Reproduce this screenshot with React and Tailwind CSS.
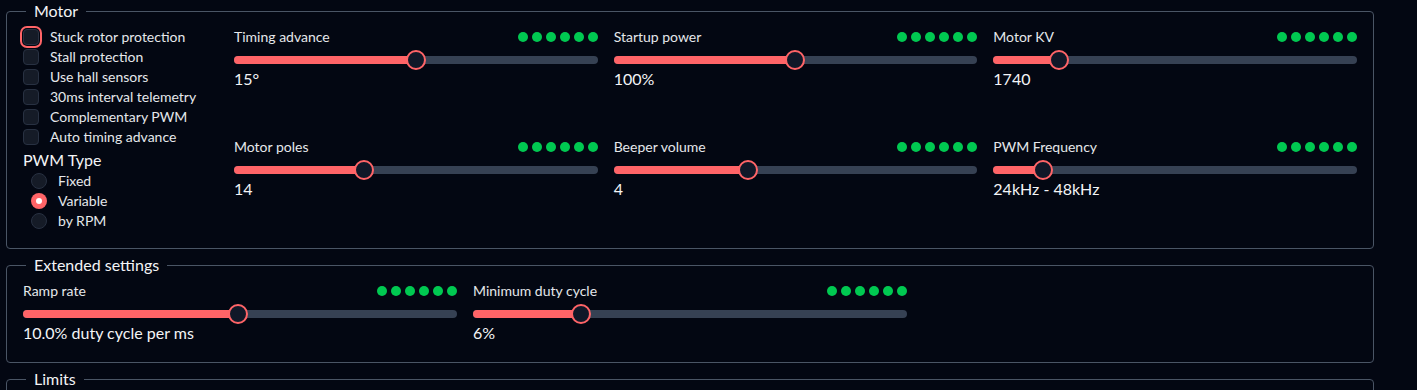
const Dots = () => (
  <div className="flex gap-[4px]">
    {Array.from({ length: 6 }).map((_, i) => (
      <div key={i} className="w-[10px] h-[10px] rounded-full bg-green-500" />
    ))}
  </div>
)

const Slider = ({ label, value, pct }) => (
  <div className="flex flex-col">
    <div className="flex items-center justify-between h-5">
      <span className="text-[14px] text-gray-200 mb-[2px]">{label}</span>
      <Dots />
    </div>
    <div className="relative h-6 mt-[1px] flex items-center">
      <div className="w-full h-2 rounded-full bg-gray-700" />
      <div
        className="absolute left-0 h-2 rounded-full bg-red-400"
        style={{ width: `calc(${pct} * (100% - 20px) + 10px)` }}
      />
      <div
        className="absolute w-5 h-5 rounded-full bg-gray-900 border-2 border-red-400"
        style={{ left: `calc(${pct} * (100% - 20px))` }}
      />
    </div>
    <div className="h-5 mt-[-3px] flex items-center text-[16px] text-gray-100">{value}</div>
  </div>
)

const Check = ({ label, focus }) => (
  <label className="flex items-center h-5 gap-[11px]">
    <span
      className={
        focus
          ? 'w-4 h-4 rounded bg-[#151b27] border border-[#283142] ring-2 ring-red-400 ring-offset-1 ring-offset-[#030712]'
          : 'w-4 h-4 rounded bg-[#151b27] border border-[#283142]'
      }
    />
    <span className="text-[14px] text-gray-200 mb-[2px]">{label}</span>
  </label>
)

const Radio = ({ label, checked }) => (
  <label className="flex items-center h-5 gap-[11px] pl-2">
    {checked ? (
      <span className="w-4 h-4 rounded-full bg-red-400 flex items-center justify-center">
        <span className="w-[6px] h-[6px] rounded-full bg-white" />
      </span>
    ) : (
      <span className="w-4 h-4 rounded-full bg-[#151b27] border border-[#283142]" />
    )}
    <span className="text-[14px] text-gray-200 mb-[2px]">{label}</span>
  </label>
)

const Legend = ({ children }) => (
  <legend className="ml-[3px] px-2 h-5 leading-5 text-[16px] text-gray-100">{children}</legend>
)

const App = () => {
  return (
    <div
      className="min-h-screen bg-[#030712] pl-[6px] pt-[1px]"
      style={{ fontFamily: 'Lato, "Open Sans", sans-serif' }}
    >
      <fieldset className="w-[1368px] border border-gray-600 rounded px-4 pt-[6px] pb-[17px]">
        <Legend>Motor</Legend>
        <div className="flex gap-4">
          <div className="w-[195px] shrink-0 flex flex-col">
            <Check label="Stuck rotor protection" focus />
            <Check label="Stall protection" />
            <Check label="Use hall sensors" />
            <Check label="30ms interval telemetry" />
            <Check label="Complementary PWM" />
            <Check label="Auto timing advance" />
            <div className="h-5 mt-[3px] flex items-center text-[16px] text-gray-100">PWM Type</div>
            <div className="flex flex-col mt-[1px]">
              <Radio label="Fixed" />
              <Radio label="Variable" checked />
              <Radio label="by RPM" />
            </div>
          </div>
          <div className="flex-1 grid grid-cols-3 gap-x-4 gap-y-[48px] content-start">
            <Slider label="Timing advance" value="15°" pct={0.5} />
            <Slider label="Startup power" value="100%" pct={0.5} />
            <Slider label="Motor KV" value="1740" pct={0.163} />
            <Slider label="Motor poles" value="14" pct={0.35} />
            <Slider label="Beeper volume" value="4" pct={0.361} />
            <Slider label="PWM Frequency" value="24kHz - 48kHz" pct={0.114} />
          </div>
        </div>
      </fieldset>

      <fieldset className="w-[1368px] mt-[6px] border border-gray-600 rounded px-4 pt-[6px] pb-[19px]">
        <Legend>Extended settings</Legend>
        <div className="grid grid-cols-3 gap-x-4">
          <Slider label="Ramp rate" value="10.0% duty cycle per ms" pct={0.495} />
          <Slider label="Minimum duty cycle" value="6%" pct={0.237} />
        </div>
      </fieldset>

      <fieldset className="w-[1368px] mt-[6px] border border-gray-600 rounded px-4 pt-[6px] pb-4">
        <Legend>Limits</Legend>
        <div className="h-10" />
      </fieldset>
    </div>
  )
}

export default App
